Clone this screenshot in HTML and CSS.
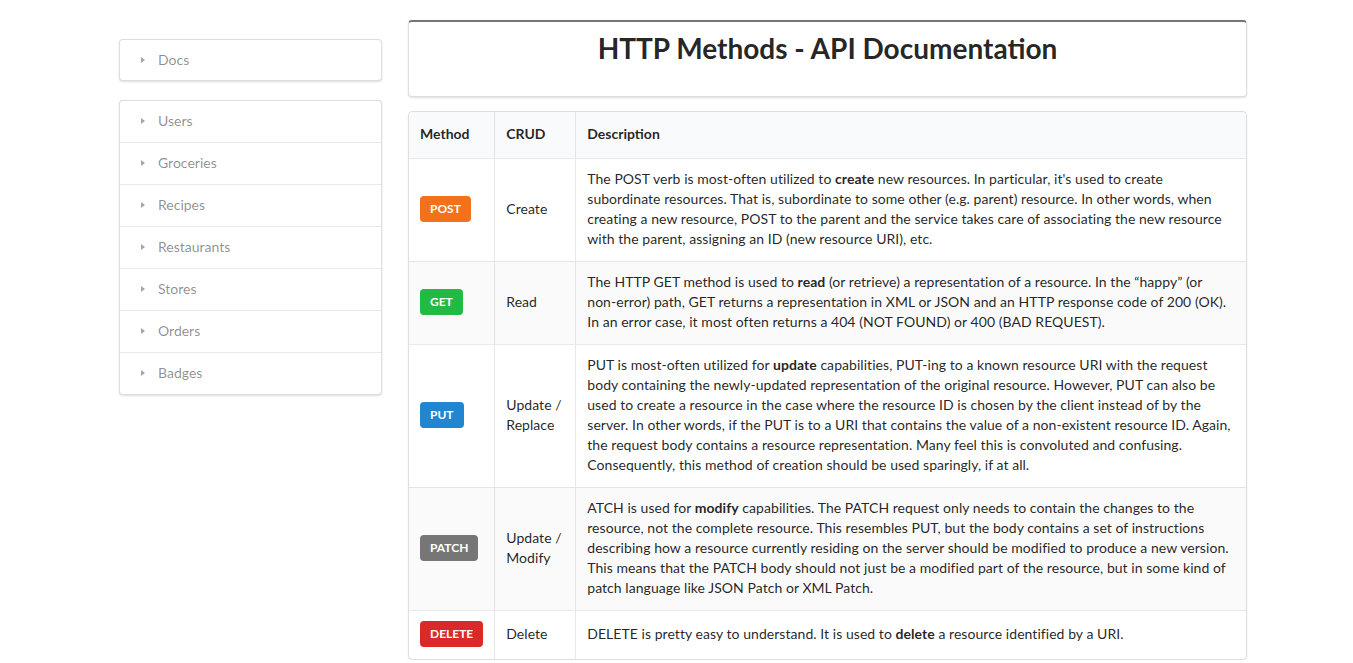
FILE: index.html
```html
<!DOCTYPE html>
<html>
<head>
<meta charset="utf-8">
<link rel="stylesheet" href="styles.css">
</head>
<body>
<div class="page">
  <aside class="sidebar">
    <div class="menu">
      <div class="item single"><span class="caret"></span>Docs</div>
    </div>
    <div class="menu">
      <div class="item"><span class="caret"></span>Users</div>
      <div class="item"><span class="caret"></span>Groceries</div>
      <div class="item"><span class="caret"></span>Recipes</div>
      <div class="item"><span class="caret"></span>Restaurants</div>
      <div class="item"><span class="caret"></span>Stores</div>
      <div class="item"><span class="caret"></span>Orders</div>
      <div class="item"><span class="caret"></span>Badges</div>
    </div>
  </aside>
  <main class="main">
    <div class="segment">
      <h1 class="title">HTTP Methods - API Documentation</h1>
    </div>
    <table class="table">
      <thead>
        <tr><th class="c-method">Method</th><th class="c-crud">CRUD</th><th>Description</th></tr>
      </thead>
      <tbody>
        <tr>
          <td><span class="label orange">POST</span></td>
          <td>Create</td>
          <td>The POST verb is most-often utilized to <b>create</b> new resources. In particular, it's used to create subordinate resources. That is, subordinate to some other (e.g. parent) resource. In other words, when creating a new resource, POST to the parent and the service takes care of associating the new resource with the parent, assigning an ID (new resource URI), etc.</td>
        </tr>
        <tr>
          <td><span class="label green">GET</span></td>
          <td>Read</td>
          <td>The HTTP GET method is used to <b>read</b> (or retrieve) a representation of a resource. In the “happy” (or <span class="nowrap">non-error)</span> path, GET returns a representation in XML or JSON and an HTTP response code of 200 (OK). In an error case, it most often returns a 404 (NOT FOUND) or 400 (BAD REQUEST).</td>
        </tr>
        <tr>
          <td><span class="label blue">PUT</span></td>
          <td>Update / Replace</td>
          <td>PUT is most-often utilized for <b>update</b> capabilities, PUT-ing to a known resource URI with the request body containing the newly-updated representation of the original resource. However, PUT can also be used to create a resource in the case where the resource ID is chosen by the client instead of by the server. In other words, if the PUT is to a URI that contains the value of a non-existent resource ID. Again, the request body contains a resource representation. Many feel this is convoluted and confusing. Consequently, this method of creation should be used sparingly, if at all.</td>
        </tr>
        <tr>
          <td><span class="label grey">PATCH</span></td>
          <td>Update / Modify</td>
          <td>ATCH is used for <b>modify</b> capabilities. The PATCH request only needs to contain the changes to the resource, not the complete resource. This resembles PUT, but the body contains a set of instructions describing how a resource currently residing on the server should be modified to produce a new version. This means that the PATCH body should not just be a modified part of the resource, but in some kind of patch language like JSON Patch or XML Patch.</td>
        </tr>
        <tr>
          <td><span class="label red">DELETE</span></td>
          <td>Delete</td>
          <td>DELETE is pretty easy to understand. It is used to <b>delete</b> a resource identified by a URI.</td>
        </tr>
      </tbody>
    </table>
  </main>
</div>
</body>
</html>
```

FILE: styles.css
```css
* { box-sizing: border-box; }
html, body { margin: 0; padding: 0; }
body {
  font-family: Lato, "Helvetica Neue", Arial, sans-serif;
  font-size: 14px;
  line-height: 20px;
  color: rgba(0,0,0,.87);
  background: #fff;
}
.page {
  display: flex;
  align-items: flex-start;
  padding: 20px 106px 0 119px;
  gap: 26px;
}
.sidebar {
  width: 263px;
  flex: none;
  display: flex;
  flex-direction: column;
  gap: 19px;
  padding-top: 19px;
}
.menu {
  border: 1px solid rgba(34,36,38,.15);
  border-radius: 4px;
  box-shadow: 0 1px 2px 0 rgba(34,36,38,.15);
  background: #fff;
}
.item {
  height: 42px;
  display: flex;
  align-items: center;
  padding-left: 21px;
  padding-bottom: 1px;
  color: rgba(0,0,0,.45);
  font-weight: 400;
  border-top: 1px solid rgba(34,36,38,.1);
}
.menu .item:first-child { border-top: none; height: 41px; }
.menu .item.single { height: 40px; }
.caret {
  width: 0; height: 0;
  border-top: 3.5px solid transparent;
  border-bottom: 3.5px solid transparent;
  border-left: 4px solid rgba(0,0,0,.35);
  margin-right: 13px;
}
.main {
  flex: 1;
  min-width: 0;
  display: flex;
  flex-direction: column;
  gap: 14px;
}
.segment {
  height: 77px;
  border: 1px solid rgba(34,36,38,.15);
  border-top: 2px solid #767676;
  border-radius: 4px;
  box-shadow: 0 1px 2px 0 rgba(34,36,38,.15);
  padding: 8px 14px;
  text-align: center;
}
.title {
  margin: 0;
  font-size: 28px;
  line-height: 36px;
  font-weight: 700;
  color: rgba(0,0,0,.87);
}
.table {
  width: 100%;
  border: 1px solid rgba(34,36,38,.15);
  border-radius: 4px;
  border-collapse: separate;
  border-spacing: 0;
  box-shadow: 0 1px 2px 0 rgba(34,36,38,.08);
}
.table th {
  background: #f9fafb;
  text-align: left;
  font-weight: 700;
  padding: 12px 11px 14px;
  border-left: 1px solid rgba(34,36,38,.1);
}
.table th:first-child { border-left: none; border-top-left-radius: 4px; }
.table th:last-child { border-top-right-radius: 4px; }
.c-method { width: 85px; }
.c-crud { width: 81px; }
.table td {
  padding: 10px 11px 12px;
  border-top: 1px solid rgba(34,36,38,.1);
  border-left: 1px solid rgba(34,36,38,.1);
  vertical-align: middle;
  letter-spacing: 0.05px;
}
.table td:first-child { border-left: none; }
.table tbody tr:nth-child(even) td { background: rgba(0,0,50,.02); }
.nowrap { white-space: nowrap; }
.label {
  display: inline-block;
  font-size: 12px;
  line-height: 12px;
  font-weight: 700;
  color: #fff;
  padding: 7px 10px;
  border-radius: 4px;
  vertical-align: middle;
  letter-spacing: 0;
}
.orange { background: #f2711c; }
.green { background: #21ba45; }
.blue { background: #2185d0; }
.grey { background: #767676; }
.red { background: #db2828; }
```
